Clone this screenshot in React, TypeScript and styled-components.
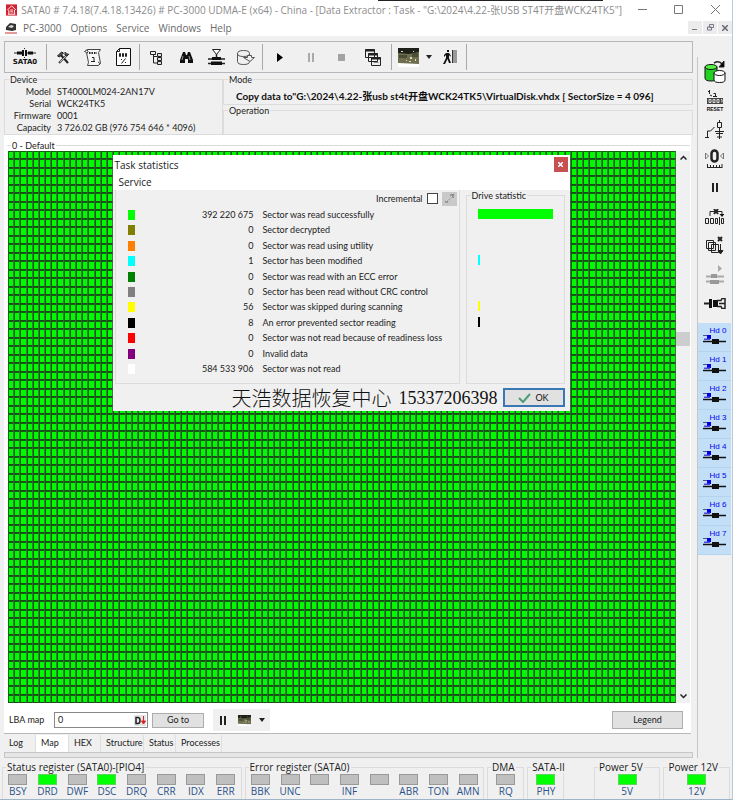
import React from "react";
import styled, { createGlobalStyle, css } from "styled-components";

const small = css`
  font-family: Lato, "Liberation Sans", "Noto Sans CJK SC", sans-serif;
  font-size: 9px;
  line-height: 12px;
`;
const ui = css`
  font-family: "Open Sans", "Noto Sans", "Noto Sans CJK SC", sans-serif;
  font-size: 10px;
  line-height: 14px;
`;

const Global = createGlobalStyle`
  * { box-sizing: border-box; }
  body { margin: 0; background: #f0f0f0; color: #222; }
  button, input { font: inherit; color: inherit; margin: 0; }
`;

const Page = styled.div`
  ${small}
  min-height: 100vh;
  display: flex;
  flex-direction: column;
  position: relative;
  background: #f0f0f0;
  border-right: 1px solid #b9cbd8;
  border-bottom: 1px solid #9fb4c6;
`;
const TopEdge = styled.div`
  position: absolute;
  top: 0;
  left: 378px;
  width: 225px;
  height: 1px;
  background: #222;
`;
const TitleBar = styled.header`
  ${ui}
  display: flex;
  align-items: center;
  height: 19px;
  padding-left: 6px;
  gap: 4px;
  background: #fff;
  color: #8c8c8c;
  white-space: nowrap;
`;
const TitleText = styled.div`
  flex: 1;
`;
const WindowButton = styled.button`
  width: 35px;
  height: 18px;
  padding: 0;
  border: 0;
  background: none;
  display: grid;
  place-items: center;
`;
const MenuBar = styled.nav`
  ${ui}
  display: flex;
  align-items: center;
  height: 17px;
  padding-left: 5px;
  background: #fff;
  color: #6a6a6a;
`;
const MenuItem = styled.button`
  border: 0;
  background: none;
  padding: 0;
  margin-left: 6px;
  margin-right: 3px;
`;
const MdiButtons = styled.div`
  display: flex;
  margin-left: auto;
  gap: 1px;
`;
const MdiButton = styled.button`
  width: 14px;
  height: 13px;
  padding: 0;
  border: 0;
  background: #ececec;
  display: grid;
  place-items: center;
`;
const Middle = styled.div`
  flex: 1;
  display: flex;
  padding-left: 4px;
`;
const Main = styled.main`
  flex: 1;
  min-width: 0;
  display: flex;
  flex-direction: column;
  padding-top: 5px;
`;
const Toolbar = styled.div`
  display: flex;
  align-items: center;
  height: 32px;
  border: 1px solid #b4b8bc;
  margin-right: 4px;
`;
const Sep = styled.span`
  width: 1px;
  height: 26px;
  margin: 0 1px;
  background: #a8a8a8;
`;
const ToolButton = styled.button<{ $w?: number }>`
  width: ${(p) => p.$w ?? 30}px;
  height: 28px;
  padding: 0;
  border: 0;
  background: none;
  display: flex;
  flex-direction: column;
  align-items: center;
  justify-content: center;
  font-family: "DejaVu Sans", sans-serif;
  font-weight: 700;
  font-size: 7px;
  line-height: 8px;
  color: #111;
`;
const InfoRow = styled.div`
  display: flex;
  padding-top: 1px;
  height: 62px;
  margin-right: 4px;
`;
const Group = styled.fieldset`
  margin: 0;
  padding: 0;
  min-width: 0;
  border: 1px solid #dcdcdc;
`;
const DeviceGroup = styled(Group)`
  width: 219px;
`;
const ModeColumn = styled.div`
  flex: 1;
  display: flex;
  flex-direction: column;
`;
const ModeGroup = styled(Group)`
  height: 31px;
`;
const Legend = styled.legend`
  margin-left: 4px;
  padding: 0 1px;
  line-height: 11px;
`;
const Specs = styled.dl`
  margin: 0;
  display: grid;
  grid-template-columns: 42px 1fr;
  column-gap: 6px;
  padding: 1px 0 0 4px;
  line-height: 12px;
`;
const SpecName = styled.dt`
  text-align: right;
`;
const SpecValue = styled.dd`
  margin: 0;
  white-space: nowrap;
`;
const ModeText = styled.div`
  font-weight: 700;
  font-size: 10px;
  line-height: 12px;
  padding: 5px 0 0 12px;
  color: #111;
  white-space: nowrap;
`;
const MapPanel = styled.section`
  flex: 1;
  display: flex;
  flex-direction: column;
  background: #fff;
  margin-right: 6px;
  border-bottom: 1px solid #b8b8b8;
`;
const MapGroup = styled(Group)`
  flex: 1;
  margin: 5px 1px 0 3px;
  border-width: 1px 0 0 0;
`;
const MapBody = styled.div`
  display: flex;
  position: relative;
`;
const CellGrid = styled.div`
  flex: 1;
  display: grid;
  grid-template-columns: repeat(108, 1fr);
  grid-template-rows: repeat(65, 1fr);
  height: calc(100vh - 248px);
  min-height: 300px;
  background: #5d8a5d;
  margin-left: 1px;
`;
const Cell = styled.i`
  border: 1px solid #0a650a;
  border-right-color: #4c704c;
  border-bottom-color: #1c4a1c;
  background: #00fa00;
`;
const ScrollBar = styled.div`
  width: 14px;
  display: flex;
  flex-direction: column;
  align-items: center;
  background: #f0f0f0;
`;
const ScrollButton = styled.button`
  width: 13px;
  height: 13px;
  padding: 0;
  border: 0;
  background: none;
  display: grid;
  place-items: center;
`;
const Track = styled.div`
  flex: 1;
  width: 100%;
  display: grid;
  grid-template-rows: 168fr 14px 344fr;
`;
const Thumb = styled.div`
  grid-row: 2;
  background: #cdcdcd;
`;
const LbaRow = styled.div`
  display: flex;
  align-items: center;
  height: 29px;
  padding: 3px 8px 0 5px;
`;
const LbaLabel = styled.label`
  width: 45px;
`;
const LbaField = styled.div`
  display: flex;
  align-items: center;
  width: 94px;
  height: 16px;
  border: 1px solid #888;
  background: #fff;
  padding-right: 1px;
`;
const LbaInput = styled.input`
  flex: 1;
  min-width: 0;
  border: 0;
  padding: 0 3px;
  outline: none;
  background: none;
`;
const PushButton = styled.button<{ $w: number; $h: number }>`
  width: ${(p) => p.$w}px;
  height: ${(p) => p.$h}px;
  padding: 0;
  border: 1px solid #adadad;
  background: #e1e1e1;
`;
const MiniGap = styled.span`
  width: 4px;
`;
const MiniTools = styled.div`
  display: flex;
  align-items: center;
  background: #f0f0f0;
  margin: 0 auto 0 9px;
  height: 22px;
  width: 57px;
`;
const Tabs = styled.div`
  display: flex;
  align-items: center;
  height: 18px;
`;
const Tab = styled.button<{ $active?: boolean; $w: number }>`
  width: ${(p) => p.$w}px;
  height: 17px;
  padding: 0 0 0 5px;
  text-align: left;
  white-space: nowrap;
  border: 0;
  border-right: 1px solid #dedede;
  background: ${(p) => (p.$active ? "#fff" : "#f0f0f0")};
`;
const BottomLine = styled.div`
  height: 6px;
  margin-right: 4px;
  border: 1px solid #c6c6c6;
  background: #e6e6e6;
`;
const Side = styled.aside`
  width: 35px;
  margin-top: 21px;
  padding-right: 1px;
  border-left: 1px solid #c6c6c6;
`;
const SideButton = styled.button`
  display: grid;
  place-items: center;
  width: 100%;
  height: 29px;
  padding: 0;
  border: 0;
  background: none;
`;
const HeadList = styled.div`
  margin-top: 5px;
`;
const HeadButton = styled.button`
  font-family: "Liberation Sans", sans-serif;
  font-size: 8px;
  line-height: 6px;
  color: #0000f0;
  width: 100%;
  height: 29px;
  display: flex;
  flex-direction: column;
  align-items: center;
  justify-content: flex-start;
  padding: 5px 0 0 0;
  border: 0;
  border-bottom: 1px solid #b3d3ee;
  background: #c2dff7;
`;
const HeadName = styled.span`
  padding-left: 7px;
`;

const Registers = styled.footer`
  ${ui}
  display: flex;
  gap: 3px;
  padding: 3px 2px 0 2px;
  height: 41px;
`;
const RegGroup = styled(Group)<{ $grow: number }>`
  flex: ${(p) => p.$grow} 1 0;
  border-bottom: 0;
  height: 38px;
`;
const RegLegend = styled.legend`
  margin-left: 3px;
  padding: 0 1px;
  line-height: 12px;
  white-space: nowrap;
`;
const RegSpacer = styled.div`
  flex: 24 1 0;
`;
const Leds = styled.div`
  display: flex;
`;
const Led = styled.div<{ $on?: boolean }>`
  flex: 1;
  display: flex;
  flex-direction: column;
  align-items: center;
  color: #2c5288;
  line-height: 13px;
  &::before {
    content: "";
    width: 17px;
    height: 9px;
    margin-top: 1px;
    border: 1px solid ${(p) => (p.$on ? "#5ed45e" : "#999")};
    background: ${(p) => (p.$on ? "#00ff00" : "#bfbfbf")};
  }
`;

const DialogLayer = styled.div`
  position: absolute;
  inset: 4px 15px auto 0;
  display: flex;
  justify-content: center;
`;
const Dialog = styled.section`
  width: 457px;
  height: 256px;
  display: flex;
  flex-direction: column;
  background: #f0f0f0;
`;
const DialogTitle = styled.div`
  ${ui}
  display: flex;
  justify-content: space-between;
  align-items: center;
  height: 19px;
  padding: 0 2px;
  background: #fff;
`;
const CloseButton = styled.button`
  width: 14px;
  height: 15px;
  padding: 0;
  border: 0;
  background: #c75050;
  display: grid;
  place-items: center;
`;
const DialogMenu = styled.div`
  ${ui}
  height: 16px;
  background: #fff;
  display: flex;
  align-items: center;
`;
const DialogBody = styled.div`
  display: flex;
  gap: 6px;
  padding: 0 5px 0 2px;
  height: 194px;
`;
const StatBox = styled.div`
  flex: 1;
  border: 1px solid #dcdcdc;
  border-top: 0;
`;
const Incremental = styled.div`
  display: flex;
  align-items: center;
  justify-content: flex-end;
  gap: 4px;
  height: 17px;
  padding-right: 2px;
`;
const Check = styled.input`
  appearance: none;
  width: 11px;
  height: 11px;
  border: 1px solid #444;
  background: #fff;
`;
const ToolSquare = styled.button`
  width: 15px;
  height: 14px;
  padding: 0;
  border: 0;
  background: #c9c9c9;
  display: grid;
  place-items: center;
`;
const StatTable = styled.table`
  border-collapse: collapse;
  table-layout: fixed;
  width: 100%;
  height: 170px;
`;
const StatCell = styled.td<{ $kind?: "swatch" | "count" }>`
  padding: 0 0 0 ${(p) => (p.$kind === "swatch" ? 12 : p.$kind === "count" ? 0 : 9)}px;
  width: ${(p) => (p.$kind === "swatch" ? "40px" : p.$kind === "count" ? "98px" : "auto")};
  text-align: ${(p) => (p.$kind === "count" ? "right" : "left")};
  white-space: nowrap;
`;
const Swatch = styled.i<{ $c: string }>`
  display: block;
  width: 7px;
  height: 10px;
  background: ${(p) => p.$c};
`;
const DriveGroup = styled(Group)`
  width: 99px;
  height: 194px;
`;
const Bars = styled.div`
  display: grid;
  grid-template-rows: repeat(11, 1fr);
  align-items: center;
  height: 170px;
  padding-left: 11px;
  margin-top: 5px;
`;
const Bar = styled.div<{ $c: string; $w: number }>`
  width: ${(p) => p.$w}px;
  height: 10px;
  background: ${(p) => p.$c};
`;
const DialogFoot = styled.div`
  flex: 1;
  display: flex;
  align-items: center;
  justify-content: flex-end;
  padding-right: 5px;
  color: #111;
`;
const Watermark = styled.div`
  display: flex;
  align-items: center;
  gap: 7px;
  margin-right: 5px;
  font-family: "Noto Sans CJK SC", sans-serif;
  font-weight: 300;
  font-size: 20px;
  line-height: 24px;
`;
const Phone = styled.span`
  font-family: "Liberation Serif", serif;
  font-size: 18px;
`;
const OkButton = styled.button`
  width: 62px;
  height: 19px;
  padding: 0;
  border: 2px solid #3a78b5;
  background: #e1e1e1;
  display: flex;
  align-items: center;
  justify-content: center;
  gap: 4px;
`;

type IconProps = { w: number; h: number; children: React.ReactNode };
const Svg = ({ w, h, children }: IconProps) => (
  <svg width={w} height={h} viewBox={`0 0 ${w} ${h}`} fill="none" stroke="#222" strokeWidth="1" aria-hidden="true">
    {children}
  </svg>
);

const AppIcon = () => (
  <Svg w={12} h={12}>
    <path d="M0 0h12v12H0z" fill="#d3202e" stroke="none" />
    <path d="M1.500 6L6 1.500 10.500 6M3 6v4.500M9 6v4.500M2 10.500h8M4.500 6h3M4.500 8h3" stroke="#fff" />
  </Svg>
);
const DriveIcon = () => (
  <Svg w={12} h={12}>
    <path d="M1 5l4-4 6 1v6l-4 1-6-1z" fill="#333" stroke="none" />
    <path d="M3 5l3-2 3 1-2 2z" fill="#ddd" stroke="none" />
    <path d="M0 11h12" stroke="#c33" />
  </Svg>
);
const SataIcon = () => (
  <Svg w={22} h={10}>
    <path d="M0 5h22M10.500 0v10" />
    <path d="M3 3.500h5v3H3zM14 3.500h5v3h-5zM8 2h5v6H8z" fill="#111" stroke="none" />
    <path d="M10.500 1v8" stroke="#eee" />
  </Svg>
);
const ToolsIcon = () => (
  <Svg w={13} h={13}>
    <path d="M3 3l8 9" strokeWidth="2" />
    <path d="M10 4l-8 8" stroke="#444" strokeWidth="2" />
    <path d="M10 4l-7 7" stroke="#ddd" strokeWidth=".8" />
    <path d="M.500 5l4-4 2 1-4 4zM8 1v3l2 1 2-2" fill="#555" />
  </Svg>
);
const ScrollIcon = () => (
  <Svg w={18} h={18}>
    <path d="M3.500 1.500h13l-2 3 2 11-2 2h-11l1-3-2-10-2-1z" fill="#f7f7f7" stroke="#444" />
    <path d="M3 1.500q2 2 0 4M14 14q3 1 1 3" stroke="#444" />
    <path d="M5 5h8" strokeWidth="2" strokeDasharray="1.500 1" />
    <path d="M8 9.500h2v4M7 13.500h4" />
  </Svg>
);
const DocIcon = () => (
  <Svg w={15} h={18}>
    <path d="M3.500.500h11v17H.500v-14z" fill="#fff" stroke="#111" />
    <path d="M.500 3.500h3v-3" />
    <path d="M3.500 5.500h1v3h-1zM6.500 5.500h1v3h-1zM9.500 5.500h1v3h-1z" />
    <path d="M5 11.500h1M9 14.500h1M9.500 10.500l-4 5" />
  </Svg>
);
const TreeIcon = () => (
  <Svg w={13} h={15}>
    <path d="M.500 1.500h5v3h-5zM3.500 5v8H7M3.500 6.500H7" />
    <path d="M7.500 3.500h4v3h-4zM7.500 7.500h4v3h-4zM7.500 11.500h4v3h-4z" fill="#ddd" />
  </Svg>
);
const BinocularsIcon = () => (
  <Svg w={13} h={13}>
    <path d="M3 1h2l1 3h1l1-3h2l3 8v3H8V8H5v4H0V9z" fill="#111" stroke="none" />
    <path d="M3 5L2 9M9 5l1 4" stroke="#999" />
  </Svg>
);
const FunnelIcon = () => (
  <Svg w={17} h={16}>
    <path d="M4.500.500h8l-4 5z" fill="#fff" />
    <path d="M8.500 5v5M0 10h17M0 14.500h17" strokeWidth="1.500" />
    <path d="M4 8h9v3H4zM3 12.500h11V16H3z" fill="#111" stroke="none" />
  </Svg>
);
const DiskIcon = () => (
  <Svg w={18} h={15}>
    <path d="M.500 3.500q0-3 6-3t6 3q0 3-6 3t-6-3zM.500 3.500v8q0 3 6 3t6-3M12.500 3.500v2" stroke="#555" />
    <path d="M6.500 7.500h4v-2h4v2h3l-4.500 4z" fill="#f0f0f0" stroke="#555" />
  </Svg>
);
const PlayIcon = () => (
  <Svg w={6} h={9}>
    <path d="M0 0l6 4.500L0 9z" fill="#000" stroke="none" />
  </Svg>
);
const PauseIcon = ({ c = "#222" }: { c?: string }) => (
  <Svg w={8} h={9}>
    <path d="M2 0v9M6 0v9" stroke={c} strokeWidth="2" />
  </Svg>
);
const StopIcon = () => (
  <Svg w={7} h={7}>
    <path d="M0 0h7v7H0z" fill="#a3a3a3" stroke="none" />
  </Svg>
);
const StackIcon = () => (
  <Svg w={17} h={17}>
    <path d="M.500.500h9v8h-9zM3.500 4.500h9v8h-9zM6.500 8.500h9v8h-9z" fill="#eee" />
    <path d="M0 1.500h10M3 5.500h10M6 9.500h10" strokeWidth="2" />
    <path d="M8.500 13.500h5" stroke="#888" />
  </Svg>
);
const BoardIcon = ({ w = 21, h = 19 }: { w?: number; h?: number }) => (
  <svg width={w} height={h} viewBox="0 0 21 19" preserveAspectRatio="none" aria-hidden="true">
    <path d="M0 0h21v19H0z" fill="#fff" />
    <path d="M0 0h21v16l-10-.500L0 15z" fill="#6f6e50" />
    <path d="M0 0h21v4l-10 2-11-1z" fill="#1c2018" />
    <path d="M1 7h8v3H1zM14 5h6v4h-6z" fill="#4c4d36" />
    <path d="M3 3h2v1H3zM12 9h2v2h-2zM17 11h1v2h-1zM8 12h1v1H8zM15 3h1v1h-1zM11 13h2v1h-2z" fill="#dcdcae" />
  </svg>
);
const CaretIcon = () => (
  <Svg w={6} h={4}>
    <path d="M0 0h6L3 4z" fill="#222" stroke="none" />
  </Svg>
);
const ExitIcon = () => (
  <Svg w={15} h={14}>
    <path d="M4 0h2v2H4zM3 3h3l2 3-1 .500L6 5v3l2 5H6L4.500 9 2 14H0l3-6V5L1 7V5z" fill="#111" stroke="none" />
    <path d="M9 0h5v13H9z" fill="#999" stroke="none" />
    <path d="M9.500 0v13" stroke="#333" />
  </Svg>
);

const SideIcons = [
  <Svg w={22} h={24}>
    <path d="M1 7v11q0 3 6 3t6-3V7z" fill="#23d023" stroke="#111" />
    <ellipse cx="7" cy="7" rx="6" ry="2.500" fill="#55ee44" stroke="#111" />
    <path d="M10 13v7q0 2.500 5.500 2.500T21 20v-7z" fill="#fff" stroke="#111" />
    <ellipse cx="15.500" cy="13" rx="5.500" ry="2.500" fill="#fff" stroke="#111" />
    <path d="M10 3q5-3 8 1" strokeWidth="1.500" />
    <path d="M20 1v6h-5z" fill="#000" />
  </Svg>,
  <svg width="20" height="22" viewBox="0 0 20 22" fill="none" stroke="#222" aria-hidden="true">
    <path d="M4.500 0v4M3 1.500h1.500M8.500 3.500h2v3M8 6.500h4M5 5l2 1" />
    <path d="M2 8h16v6H2z" fill="#444" stroke="none" />
    <path d="M4 9.500h2v3H4zM8 9.500h2v3H8zM12 9.500h2v3h-2zM16 9.500h1v3" stroke="#ddd" />
    <text x="10" y="21" textAnchor="middle" fontSize="5" fontWeight="700" fontFamily="Liberation Sans" fill="#111" stroke="none">RESET</text>
  </svg>,
  <Svg w={19} h={20}>
    <path d="M0 17.500h4M2.500 17v-6h3l4-4M14.500 0v19M10 11.500h9M11 13.500h7M12 17h5" />
    <path d="M12.500 2.500h4v5h-4z" fill="#f0f0f0" />
  </Svg>,
  <Svg w={19} h={20}>
    <rect x="6.500" y="1.500" width="6" height="11" rx="3" strokeWidth="2.500" />
    <path d="M.500 4v6l3-3zM18.500 4v6l-3-3z" stroke="#777" />
    <path d="M2.500 15v4M5.500 16v3M8.500 16v3M11.500 16v3M14.500 16v3M17 15v4M2 18.500h15" />
  </Svg>,
  <PauseIcon />,
  <Svg w={19} h={16}>
    <path d="M5 7V2.500h12V6" />
    <path d="M9 0l4 5M13 0L9 5" strokeWidth="2" />
    <path d="M14.500 5h5L17 8z" fill="#111" stroke="none" />
    <path d="M.500 9.500h3v5h-3zM5.500 9.500h3v5h-3zM10.500 9.500h2v5h-2zM14.500 8v8M16.500 9.500h2v5h-2z" />
  </Svg>,
  <Svg w={19} h={19}>
    <path d="M1.500 4.500h7v8h-7zM3.500 6.500h7v8h-7zM6.500 8.500h7v8h-7z" fill="#f0f0f0" />
    <path d="M13 1l4 4M17 1l-4 4" strokeWidth="2" />
    <path d="M15.500 8v9M13 14.500h5L15.500 18z" fill="#111" />
  </Svg>,
  <Svg w={18} h={19}>
    <path d="M12 0v7l4-3.500z" fill="#aaa" stroke="none" />
    <path d="M0 11.500h18M0 16.500h18" stroke="#aaa" strokeWidth="2" />
    <path d="M5 9h6v4H5zM4 15h9v4H4z" fill="#999" stroke="none" />
  </Svg>,
  <Svg w={22} h={11}>
    <path d="M0 5.500h8" strokeWidth="2" />
    <path d="M5 1h3v9H5zM9 2h5v7H9z" fill="#111" stroke="none" />
    <path d="M13 2.500h4l1-2h3v10h-3l-1-2h-4M15 5.500h6" strokeWidth="1.500" />
  </Svg>,
];
const HeadIcon = () => (
  <Svg w={23} h={10}>
    <path d="M0 1.500h4" stroke="#557" />
    <path d="M0 7.500h23" stroke="#111" strokeWidth="1.500" />
    <path d="M4 1h4v4H4z" fill="#0000e6" stroke="none" />
    <path d="M1 4.500h6V6H1z" fill="#4a4adf" stroke="none" />
    <path d="M9 5h7v5H9z" fill="#111" stroke="none" />
  </Svg>
);

const stats = [
  { color: "#00ff00", count: "392 220 675", text: "Sector was read successfully", bar: 75 },
  { color: "#808000", count: "0", text: "Sector decrypted", bar: 0 },
  { color: "#ff8000", count: "0", text: "Sector was read using utility", bar: 0 },
  { color: "#00ffff", count: "1", text: "Sector has been modified", bar: 2 },
  { color: "#008000", count: "0", text: "Sector was read with an ECC error", bar: 0 },
  { color: "#808080", count: "0", text: "Sector has been read without CRC control", bar: 0 },
  { color: "#ffff00", count: "56", text: "Sector was skipped during scanning", bar: 2 },
  { color: "#000000", count: "8", text: "An error prevented sector reading", bar: 2 },
  { color: "#ff0000", count: "0", text: "Sector was not read because of readiness loss", bar: 0 },
  { color: "#800080", count: "0", text: "Invalid data", bar: 0 },
  { color: "#ffffff", count: "584 533 906", text: "Sector was not read", bar: 0 },
];
const specs = [
  ["Model", "ST4000LM024-2AN17V"],
  ["Serial", "WCK24TK5"],
  ["Firmware", "0001"],
  ["Capacity", "3 726.02 GB (976 754 646 * 4096)"],
];
type RegisterData = { title: string; grow: number; leds: [string, boolean][] };
const registers: RegisterData[] = [
  {
    title: "Status register (SATA0)-[PIO4]",
    grow: 243,
    leds: [["BSY", false], ["DRD", true], ["DWF", false], ["DSC", true], ["DRQ", false], ["CRR", false], ["IDX", false], ["ERR", false]],
  },
  {
    title: "Error register (SATA0)",
    grow: 243,
    leds: [["BBK", false], ["UNC", false], ["", false], ["INF", false], ["", false], ["ABR", false], ["TON", false], ["AMN", false]],
  },
  { title: "DMA", grow: 36, leds: [["RQ", false]] },
  { title: "SATA-II", grow: 36, leds: [["PHY", true]] },
];
const power: RegisterData[] = [
  { title: "Power 5V", grow: 66, leds: [["5V", true]] },
  { title: "Power 12V", grow: 66, leds: [["12V", true]] },
];
const tabs: [string, number][] = [["Log", 32], ["Map", 33], ["HEX", 32], ["Structure", 43], ["Status", 32], ["Processes", 46]];
const CELLS = 108 * 65;

const Register = ({ title, grow, leds }: RegisterData) => (
  <RegGroup $grow={grow}>
    <RegLegend>{title}</RegLegend>
    <Leds>
      {leds.map(([name, on], i) => (
        <Led key={i} $on={on}>{name}</Led>
      ))}
    </Leds>
  </RegGroup>
);

const StatisticsDialog = () => (
  <Dialog role="dialog" aria-label="Task statistics">
    <DialogTitle>
      Task statistics
      <CloseButton aria-label="Close statistics">
        <Svg w={5} h={5}><path d="M0 0l5 5M5 0L0 5" stroke="#fff" strokeWidth="1.500" /></Svg>
      </CloseButton>
    </DialogTitle>
    <DialogMenu><MenuItem>Service</MenuItem></DialogMenu>
    <DialogBody>
      <StatBox>
        <Incremental>
          <label htmlFor="incremental">Incremental</label>
          <Check id="incremental" type="checkbox" />
          <ToolSquare aria-label="Settings">
            <Svg w={11} h={11}><path d="M1 9l4-3 5-5M6 2h3v3M3 7v3" stroke="#888" strokeWidth="1.500" /><path d="M2 8l6-5" stroke="#eee" /></Svg>
          </ToolSquare>
        </Incremental>
        <StatTable>
          <tbody>
            {stats.map((s) => (
              <tr key={s.text}>
                <StatCell $kind="swatch"><Swatch $c={s.color} /></StatCell>
                <StatCell $kind="count">{s.count}</StatCell>
                <StatCell>{s.text}</StatCell>
              </tr>
            ))}
          </tbody>
        </StatTable>
      </StatBox>
      <DriveGroup>
        <Legend>Drive statistic</Legend>
        <Bars>
          {stats.map((s) => <Bar key={s.text} $c={s.color} $w={s.bar} />)}
        </Bars>
      </DriveGroup>
    </DialogBody>
    <DialogFoot>
      <Watermark>天浩数据恢复中心<Phone>15337206398</Phone></Watermark>
      <OkButton>
        <Svg w={13} h={10}><path d="M1 5l4 4 7-8" stroke="#4d9d78" strokeWidth="2" /></Svg>
        OK
      </OkButton>
    </DialogFoot>
  </Dialog>
);

export default function App() {
  return (
    <Page>
      <Global />
      <TopEdge />
      <TitleBar>
        <AppIcon />
        <TitleText>{'SATA0 # 7.4.18(7.4.18.13426) # PC-3000 UDMA-E (x64) - China - [Data Extractor : Task - "G:\\2024\\4.22-张USB ST4T开盘WCK24TK5"]'}</TitleText>
        <WindowButton aria-label="Minimize"><Svg w={9} h={9}><path d="M0 4.500h9" stroke="#777" /></Svg></WindowButton>
        <WindowButton aria-label="Maximize"><Svg w={9} h={9}><path d="M.500.500h8v8h-8z" stroke="#777" /></Svg></WindowButton>
        <WindowButton aria-label="Close"><Svg w={9} h={9}><path d="M0 0l9 9M9 0L0 9" stroke="#777" /></Svg></WindowButton>
      </TitleBar>
      <MenuBar>
        <DriveIcon />
        {["PC-3000", "Options", "Service", "Windows", "Help"].map((m) => <MenuItem key={m}>{m}</MenuItem>)}
        <MdiButtons>
          <MdiButton aria-label="Minimize task"><Svg w={6} h={6}><path d="M0 4.500h5" stroke="#778" /></Svg></MdiButton>
          <MdiButton aria-label="Restore task"><Svg w={7} h={7}><path d="M2.500.500h4v3h-4zM.500 3h4v3h-4z" stroke="#778" /></Svg></MdiButton>
          <MdiButton aria-label="Close task"><Svg w={6} h={6}><path d="M0 0l6 6M6 0L0 6" stroke="#667" strokeWidth="1.500" /></Svg></MdiButton>
        </MdiButtons>
      </MenuBar>
      <Middle>
        <Main>
          <Toolbar>
            <ToolButton $w={40}><SataIcon />SATA0</ToolButton>
            <Sep />
            <ToolButton aria-label="Utilities"><ToolsIcon /></ToolButton>
            <ToolButton aria-label="Script"><ScrollIcon /></ToolButton>
            <ToolButton aria-label="Report"><DocIcon /></ToolButton>
            <Sep />
            <ToolButton aria-label="Tree"><TreeIcon /></ToolButton>
            <ToolButton aria-label="Search"><BinocularsIcon /></ToolButton>
            <ToolButton aria-label="Filter"><FunnelIcon /></ToolButton>
            <ToolButton aria-label="Drive"><DiskIcon /></ToolButton>
            <Sep />
            <ToolButton $w={32} aria-label="Start"><PlayIcon /></ToolButton>
            <ToolButton aria-label="Pause"><PauseIcon c="#aaa" /></ToolButton>
            <ToolButton aria-label="Stop"><StopIcon /></ToolButton>
            <ToolButton $w={34} aria-label="Copy tasks"><StackIcon /></ToolButton>
            <Sep />
            <ToolButton aria-label="Board"><BoardIcon /></ToolButton>
            <ToolButton $w={12} aria-label="Board options"><CaretIcon /></ToolButton>
            <ToolButton aria-label="Exit"><ExitIcon /></ToolButton>
            <Sep />
          </Toolbar>
          <InfoRow>
            <DeviceGroup>
              <Legend>Device</Legend>
              <Specs>
                {specs.map(([k, v]) => (
                  <React.Fragment key={k}>
                    <SpecName>{k}</SpecName>
                    <SpecValue>{v}</SpecValue>
                  </React.Fragment>
                ))}
              </Specs>
            </DeviceGroup>
            <ModeColumn>
              <ModeGroup>
                <Legend>Mode</Legend>
                <ModeText>{'Copy data to"G:\\2024\\4.22-张usb st4t开盘WCK24TK5\\VirtualDisk.vhdx [ SectorSize = 4 096]'}</ModeText>
              </ModeGroup>
              <ModeGroup>
                <Legend>Operation</Legend>
              </ModeGroup>
            </ModeColumn>
          </InfoRow>
          <MapPanel>
            <MapGroup>
              <Legend>0 - Default</Legend>
              <MapBody>
                <CellGrid>
                  {Array.from({ length: CELLS }, (_, i) => <Cell key={i} />)}
                </CellGrid>
                <ScrollBar>
                  <ScrollButton aria-label="Scroll up"><Svg w={7} h={5}><path d="M.500 4.500l3-3 3 3" strokeWidth="1.500" /></Svg></ScrollButton>
                  <Track><Thumb /></Track>
                  <ScrollButton aria-label="Scroll down"><Svg w={7} h={5}><path d="M.500.500l3 3 3-3" strokeWidth="1.500" /></Svg></ScrollButton>
                </ScrollBar>
                <DialogLayer><StatisticsDialog /></DialogLayer>
              </MapBody>
            </MapGroup>
            <LbaRow>
              <LbaLabel htmlFor="lba">LBA map</LbaLabel>
              <LbaField>
                <LbaInput id="lba" defaultValue="0" />
                <Svg w={12} h={11}>
                  <path d="M0 0h12v11H0z" fill="#e4e4e4" stroke="none" />
                  <path d="M2 2.500h2q2 0 2 3t-2 3H2z" strokeWidth="1.500" />
                  <path d="M9.500 1v8M7.500 6l2 3 2-3z" stroke="#d22" fill="#d22" />
                </Svg>
              </LbaField>
              <MiniGap />
              <PushButton $w={52} $h={15}>Go to</PushButton>
              <MiniTools>
                <ToolButton $w={19} aria-label="Pause map"><PauseIcon /></ToolButton>
                <ToolButton $w={24} aria-label="Board view"><BoardIcon w={13} h={11} /></ToolButton>
                <ToolButton $w={12} aria-label="Board view options"><CaretIcon /></ToolButton>
              </MiniTools>
              <PushButton $w={71} $h={18}>Legend</PushButton>
            </LbaRow>
          </MapPanel>
          <Tabs role="tablist">
            {tabs.map(([t, w]) => (
              <Tab key={t} role="tab" $w={w} $active={t === "Map"} aria-selected={t === "Map"}>{t}</Tab>
            ))}
          </Tabs>
          <BottomLine />
        </Main>
        <Side>
          {SideIcons.map((icon, i) => <SideButton key={i} aria-label={`Tool ${i + 1}`}>{icon}</SideButton>)}
          <HeadList>
            {Array.from({ length: 8 }, (_, i) => (
              <HeadButton key={i}><HeadName>Hd {i}</HeadName><HeadIcon /></HeadButton>
            ))}
          </HeadList>
        </Side>
      </Middle>
      <Registers>
        {registers.map((r) => <Register key={r.title} {...r} />)}
        <RegSpacer />
        {power.map((r) => <Register key={r.title} {...r} />)}
      </Registers>
    </Page>
  );
}
